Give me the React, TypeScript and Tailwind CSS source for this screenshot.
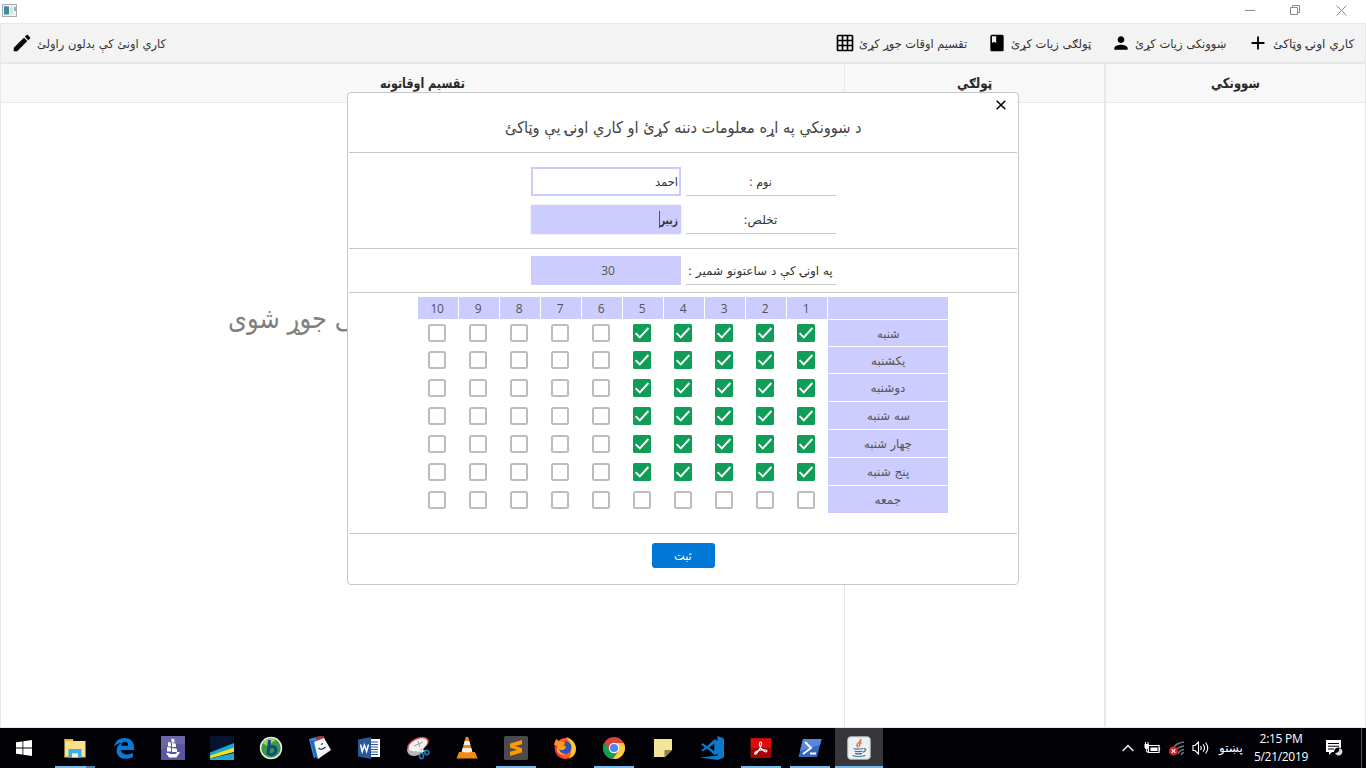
import { useLayoutEffect, useRef, useState, type ReactNode } from "react";
import { MdAdd, MdBook, MdEdit, MdGridOn, MdPerson } from "react-icons/md";

const DAYS = ["شنبه", "یکشنبه", "دوشنبه", "سه شنبه", "چهار شنبه", "پنج شنبه", "جمعه"];
const DAY_WIDTHS = [23, 34, 35, 43, 48, 42, 27];
const PERIODS = [1, 2, 3, 4, 5, 6, 7, 8, 9, 10];

/** Keeps a line of text at a fixed width whichever fallback font draws it. */
function Fit({ w, className = "", children }: { w: number; className?: string; children: ReactNode }) {
  const ref = useRef<HTMLSpanElement>(null);
  const [scale, setScale] = useState(1);
  useLayoutEffect(() => {
    if (ref.current && ref.current.offsetWidth) setScale(w / ref.current.offsetWidth);
  }, [w]);
  return (
    <span dir="ltr" className={`inline-flex shrink-0 justify-start font-['DejaVu_Sans',sans-serif] whitespace-nowrap ${className}`} style={{ width: w }}>
      <span ref={ref} dir="rtl" className="inline-block shrink-0 origin-left" style={{ transform: `scaleX(${scale})` }}>
        {children}
      </span>
    </span>
  );
}

function Check({ on }: { on: boolean }) {
  return on ? (
    <svg className="block size-[18px]" viewBox="0 0 18 18">
      <rect width="18" height="18" rx="1.5" fill="#0f9d58" />
      <path d="M2.6 9.2l4.2 4.2L15.4 4" fill="none" stroke="#fff" strokeWidth="1.9" />
    </svg>
  ) : (
    <span className="block size-[18px] rounded-[2.5px] border-2 border-[#bdbdbd] bg-white" />
  );
}

function TitleBar() {
  return (
    <div className="flex h-[23px] shrink-0 items-start justify-between bg-white">
      <svg className="mt-[4px] ml-[2px] h-[13px] w-[15px]" viewBox="0 0 15 13">
        <rect x=".5" y=".5" width="14" height="12" fill="#f2f2f4" stroke="#a7acb2" />
        <rect x="2" y="2.5" width="5" height="8" fill="#3c8f93" />
        <rect x="2" y="2.5" width="3" height="4" fill="#4a7fae" />
        <rect x="8" y="2.5" width="3" height="8" fill="#dedfe3" />
        <rect x="12" y="3" width="2" height="4" fill="#7dc0ae" />
      </svg>
      <div className="mt-[5px] mr-[19px] flex gap-[35px]">
        <svg className="-mr-px size-[11px]" viewBox="0 0 11 11"><path d="M0 5.5h10" stroke="#888" /></svg>
        <svg className="size-[11px]" viewBox="0 0 11 11" fill="none" stroke="#888">
          <path d="M.5 2.5h7v7h-7zM2.5 2.5v-2h7v7h-2" />
        </svg>
        <svg className="size-[11px]" viewBox="0 0 11 11"><path d="M.5.5l10 10M10.5.5l-10 10" stroke="#888" /></svg>
      </div>
    </div>
  );
}

function Toolbar() {
  return (
    <div className="flex h-[41px] shrink-0 items-center border border-b-2 border-[#e8e8e8] bg-[#f3f3f3] text-[12px] text-[#333]">
      <MdEdit className="ml-[10px] size-[22px] text-black" />
      <Fit w={129} className="ml-[4px] pt-px">كاري اونئ كې بدلون راولئ</Fit>
      <div className="ml-auto flex items-center">
        <MdGridOn className="size-[20px] text-black" />
        <Fit w={108} className="ml-[4px] pt-px">تقسیم اوقات جوړ کړئ</Fit>
        <MdBook className="ml-[20px] size-[20px] text-black" />
        <Fit w={80} className="ml-[4px] pt-px">ټولګی زیات کړئ</Fit>
        <MdPerson className="ml-[20px] size-[20px] text-black" />
        <Fit w={91} className="ml-[4px] pt-px">ښوونکی زیات کړئ</Fit>
        <MdAdd className="ml-[21px] size-[22px] text-black" />
        <Fit w={81} className="mr-[11px] ml-[4px] pt-px">كاري اونۍ وټاکئ</Fit>
      </div>
    </div>
  );
}

function Column({ title, w, className, children }: { title: string; w: number; className: string; children?: ReactNode }) {
  return (
    <section className={`flex shrink-0 flex-col border-[#e8e8e8] ${className}`}>
      <div className="flex h-[39px] items-center justify-center border-b border-[#e8e8e8] bg-[#f8f8f8] pt-px text-[14px] font-bold text-[#2a2a2a]">
        <Fit w={w}>{title}</Fit>
      </div>
      {children}
    </section>
  );
}

function LabelCell({ w, children }: { w: number; children: ReactNode }) {
  return (
    <div className="flex h-[29px] w-[150px] items-center justify-center border-b border-[#c8c8c8] pt-[2px]">
      <Fit w={w}>{children}</Fit>
    </div>
  );
}

function TeacherDialog() {
  return (
    <div className="absolute top-[92px] left-[347px] flex h-[493px] w-[672px] flex-col rounded-[4px] border border-[#c8c8c8] bg-white px-px text-[12px] text-[#333]">
      <div className="relative flex h-[60px] shrink-0 items-center justify-center border-b border-[#c8c8c8] pt-[11px] text-[16px] text-[#444]">
        <Fit w={357}>د ښوونکي په اړه معلومات دننه کړئ او کاري اونۍ یې وټاکئ</Fit>
        <svg className="absolute top-[7px] right-[11px] size-[10px]" viewBox="0 0 10 10">
          <path d="M.7.7l8.6 8.6M9.3.7L.7 9.3" stroke="#000" strokeWidth="1.5" />
        </svg>
      </div>

      <div className="flex h-[96px] shrink-0 flex-col items-center gap-[9px] border-b border-[#c8c8c8] pt-[14px]">
        <div className="flex gap-[5px]">
          <div className="flex h-[29px] w-[150px] items-center justify-end border-2 border-[#ccccff] pr-px">
            <Fit w={23}>احمد</Fit>
          </div>
          <LabelCell w={23}>نوم :</LabelCell>
        </div>
        <div className="flex gap-[5px]">
          <div className="flex h-[29px] w-[150px] items-center justify-end rounded-[1px] bg-[#ccccff] pr-[3px] font-bold shadow-[0_0_2px_#ccccff]">
            <span className="mb-px h-[17px] w-px bg-[#555]" />
            <Fit w={18}>زبیر</Fit>
          </div>
          <LabelCell w={34}>تخلص:</LabelCell>
        </div>
      </div>

      <div className="flex h-[44px] shrink-0 justify-center gap-[5px] border-b border-[#c8c8c8] pt-[7px]">
        <div className="flex h-[29px] w-[150px] items-center justify-center bg-[#ccccff] pt-px pl-[5px] tracking-[-0.2px] text-[#555]">30</div>
        <LabelCell w={145}>په اونۍ کې د ساعتونو شمیر :</LabelCell>
      </div>

      <div dir="rtl" className="flex h-[241px] shrink-0 flex-col gap-px border-b border-[#c8c8c8] pt-[4px] pr-[69px] text-[#555]">
        <div className="flex h-[22px] gap-px">
          <div className="w-[120px] bg-[#ccccff]" />
          {PERIODS.map((p) => (
            <div key={p} className="flex w-[40px] items-center justify-center bg-[#ccccff] pt-[2px] pr-[3px] pl-px tracking-[-0.3px]">
              {p}
            </div>
          ))}
        </div>
        {DAYS.map((day, r) => (
          <div key={day} className={`flex gap-px ${r < 2 ? "h-[26px]" : "h-[27px]"}`}>
            <div className="flex w-[120px] items-center justify-center bg-[#ccccff] pt-px">
              <Fit w={DAY_WIDTHS[r]}>{day}</Fit>
            </div>
            {PERIODS.map((p) => (
              <div key={p} className={`flex w-[40px] justify-end pl-[10px] ${r < 2 ? "pt-[4px]" : "pt-[5px]"}`}>
                <Check on={r < 6 && p <= 5} />
              </div>
            ))}
          </div>
        ))}
      </div>

      <div className="flex justify-center pt-[9px]">
        <button className="flex h-[25px] w-[63px] items-center justify-center rounded-[3px] bg-[#0078d7] text-white">
          <Fit w={18}>ثبت</Fit>
        </button>
      </div>
    </div>
  );
}

const APPS: { name: string; state?: "open" | "active"; art: ReactNode }[] = [
  {
    name: "explorer", state: "open",
    art: <>
      <path d="M1.500 3h8l1 2h12v16h-21z" fill="#ffe08a" />
      <path d="M1.500 3h8v2h-8z" fill="#eab038" />
      <path d="M1.500 20h21v1.500h-21z" fill="#f1c75a" />
      <path d="M5.500 21.500v-8.500h13v8.500h-3.500v-4H9v4z" fill="#38b0ea" />
      <path d="M9 17.500h6v4H9z" fill="#f7f0d8" />
    </>,
  },
  {
    name: "edge",
    art: <path d="M2 11C3 5 7.500 2 12.500 2 19 2 22.200 6.500 22.200 12v2.100H9c.2 3 2.600 4.400 5.700 4.400 2.400 0 4.400-.7 6.200-1.800V21c-2 1.200-4.400 1.800-7.100 1.800C7.900 22.800 4.600 19 4.600 14.400c0-3.300 1.800-6.100 4.800-7.500C6.300 7 3.500 8.800 2 11zm7.200-1.200h7c0-2.400-1.200-4-3.400-4s-3.400 1.800-3.600 4z" fill="#0a7ad8" />,
  },
  {
    name: "frigate",
    art: <>
      <rect width="24" height="24" fill="#5a559f" />
      <path d="M0 0h24v9L11 7 0 14z" fill="#746fae" opacity=".7" />
      <path d="M10.500 2.500q3 0 3 1.500v2.500h-3zM7 6q3 0 3 2v2.500H7zM11 7q4 0 4 1.500v2.500h-4zM6 11q4 0 4 1.500v3H6zM11 12q5 0 5 1.500v2.500h-5zM5 17h3l1 1h6l1-2h3l-3.500 5.500H8z" fill="#fff" />
    </>,
  },
  {
    name: "stripes",
    art: <>
      <path d="M0 0h24v24H0z" fill="#08132d" />
      <path d="M0 16.500L24 7v5L0 20z" fill="#19a3d9" />
      <path d="M0 19.500L24 11.500v4.500L0 22.500z" fill="#e8e11b" />
      <path d="M0 24v-1.500L24 17v7z" fill="#22a8d8" />
    </>,
  },
  {
    name: "b",
    art: <>
      <circle cx="12" cy="12" r="11.200" fill="#e7f0e4" />
      <circle cx="12" cy="12" r="9.700" fill="#3a9b3e" />
      <path d="M4 7a9 9 0 0 1 13-3L8 10z" fill="#a0d468" />
      <path d="M10.500 4L9 17.500q4 2.500 7-.5 2-3 0-5.500-2.500-2-5 0" fill="none" stroke="#15468f" strokeWidth="3" />
    </>,
  },
  {
    name: "notebook",
    art: <>
      <path d="M1 3l12-3 2 3-9 20z" fill="#3b8ee8" />
      <path d="M7 1l9-1 1 4-8 2z" fill="#9b4033" />
      <path d="M2 4l5 17 3 2L7 5z" fill="#1d66c4" />
      <path d="M6 6l10-4 7 12-13 9z" fill="#f4f5fb" />
      <path d="M10.500 12q3 3 7-1M13 8.500l2-1" fill="none" stroke="#26365c" strokeWidth="1.200" />
    </>,
  },
  {
    name: "word",
    art: <>
      <path d="M12 3h11v18H12z" fill="#fff" />
      <path d="M14 6h7M14 8.500h7M14 11h7M14 13.500h7M14 16h7M14 18.500h7" stroke="#2b579a" />
      <path d="M1 3.500L14 1v22L1 20.500z" fill="#2b579a" />
      <path d="M3.500 8.500l1.700 7 2.200-6.500 2.200 6.500 1.900-7" fill="none" stroke="#fff" strokeWidth="1.500" />
    </>,
  },
  {
    name: "snip",
    art: <>
      <ellipse cx="12" cy="8.500" rx="11.500" ry="6.500" transform="rotate(-25 12 8.500)" fill="#d94b52" />
      <path d="M1 13q0 6 6 7 6 0 10-4l-3-4z" fill="#b9b9b9" />
      <ellipse cx="12" cy="8.800" rx="10" ry="5.400" transform="rotate(-25 12 8.800)" fill="#f3f3f3" />
      <path d="M8 10l9-4M12 5l2 6" stroke="#999" />
      <path d="M11 15l9 0M17 11l-1 6" stroke="#eee" strokeWidth="1.500" />
      <circle cx="20.800" cy="16.500" r="2.100" fill="none" stroke="#1c7bb8" strokeWidth="1.600" />
      <ellipse cx="15.500" cy="20" rx="1.900" ry="2.800" fill="none" stroke="#1c7bb8" strokeWidth="1.600" />
    </>,
  },
  {
    name: "vlc",
    art: <>
      <path d="M4 16h16l2.500 6.500h-21z" fill="#f08a12" />
      <path d="M10.800 1h2.400L18 18q-6 3-12 0z" fill="#f58a14" />
      <path d="M9.700 5h4.600l1.100 4H8.600zM7.700 12h8.600l1 3.500q-5.300 2-10.600 0z" fill="#f2f2f2" />
    </>,
  },
  {
    name: "sublime", state: "open",
    art: <>
      <rect width="24" height="24" rx="1.500" fill="#4b4b4b" />
      <path d="M6 7.500L18 4v4.200L11 10l7 2.200v4.300L6 20v-4.200l7-2L6 11.700z" fill="#ff9800" />
    </>,
  },
  {
    name: "firefox",
    art: <>
      <circle cx="12.500" cy="12.500" r="10.500" fill="#ff5a26" />
      <path d="M13 1q9 3 10 11 0 8-7 10.500Q22 12 13 1z" fill="#ffc928" />
      <path d="M1 9Q2 4 4 3l2 3q4-2 6 1l-4 4z" fill="#ff9526" />
      <path d="M1.500 10q0 12 11 13-8-4-6-12z" fill="#f0265c" />
      <path d="M12 5q7 1 6.500 7-1 5.500-6.500 6-5-.5-6-5 4 2 6-1l-3-2q1-1 3-1z" fill="#2a52b8" />
      <path d="M6 9l5 .5q3 1 1 3-3 3-6 0 1 6 7 5-6 3-9-2-1-4 2-6.500z" fill="#ffad1f" />
    </>,
  },
  {
    name: "chrome", state: "open",
    art: <>
      <circle cx="12" cy="12" r="11" fill="#da4437" />
      <path d="M2.500 6.500A11 11 0 0 0 11 23l5-8.500-8.800 0z" fill="#109d58" />
      <path d="M11 23A11 11 0 0 0 21.700 7H12l4.500 8z" fill="#ffcd42" />
      <circle cx="12" cy="12" r="5.200" fill="#fff" />
      <circle cx="12" cy="12" r="4.100" fill="#4a8af4" />
    </>,
  },
  {
    name: "note",
    art: <>
      <path d="M3 3h18v11l-7 7H3z" fill="#f1e597" />
      <path d="M13.500 21v-7H21z" fill="#8a8150" />
    </>,
  },
  {
    name: "vscode",
    art: <path d="M17.500 0L24 2.500v19L17.500 24 0 21.500l17.500-2V4.300zM3 7.300l4 3 7.500-7 3 1.400v13l-3 1.300L7 12.500l-4 3-2-1 3.800-3.100L1 8.300zM9.300 11.500l5 3.800V7.500z" fill="#0a7bcc" fillRule="evenodd" />,
  },
  {
    name: "pdf", state: "open",
    art: <>
      <path d="M1.500 2h21v20h-21z" fill="#a50505" />
      <path d="M2 2.500h20V12H2z" fill="#dd0d0d" />
      <path d="M11.500 6q2 0 .5 4-2 5-5 8-2 .5-1-1.500 4-3.500 11-2.500 2 1 0 2-4-1-6.500-6.500-.5-3 1-3.500z" fill="none" stroke="#fff" strokeWidth="1.100" />
    </>,
  },
  {
    name: "powershell", state: "open",
    art: <>
      <path d="M5 3h18.500L19 21H.500z" fill="#3567bd" />
      <path d="M5 3h18.500L22 9 2 15z" fill="#5688dd" />
      <path d="M7 6l6 6-8 6M12 17.500h6" fill="none" stroke="#fff" strokeWidth="2" />
    </>,
  },
  {
    name: "java", state: "active",
    art: <>
      <rect x=".7" y=".7" width="22.600" height="22.600" rx="3" fill="#eef1f3" stroke="#a9b0b5" />
      <path d="M13.500 3q1 2-2 4t0 4.500M14.500 6.500q-3 2-1.500 4" fill="none" stroke="#e0702a" strokeWidth="1.500" />
      <path d="M6.500 12.500q4 1.200 9.500 0M7.500 15q4 1.200 8 0M8 17.300q3.500 1 7 0M5.500 19.500q6 2 13 0M16.500 12.500q3.500 0 1.500 2.500l-2 1.300" fill="none" stroke="#40718f" strokeWidth="1.200" />
    </>,
  },
];

function Taskbar() {
  return (
    <div className="flex h-[40px] shrink-0 items-center bg-[#020106] text-white">
      <div className="flex w-[50px] shrink-0 pl-[16px]">
        <svg className="size-[16px]" viewBox="0 0 16 16" fill="#fff">
          <path d="M0 2.300L6.500 1.400v6.200H0zM7.300 1.300L16 0v7.600H7.300zM0 8.400h6.500v6.200L0 13.700zM7.300 8.400H16V16l-8.700-1.300z" />
        </svg>
      </div>
      {APPS.map((a) => (
        <div key={a.name} className="flex h-[40px] w-[49px] shrink-0 justify-center">
          <div className={`flex h-full flex-col items-center justify-between pt-[8px] ${a.state === "active" ? "w-[48px] shrink-0 bg-[#37363b]" : "w-[40px]"}`}>
            <svg className="size-[24px]" viewBox="0 0 24 24">{a.art}</svg>
            {a.state && (
              <div className="flex h-[2px] w-full bg-[#76b9ed]">
                {a.name === "explorer" && <span className="ml-auto w-[9px] bg-[#4d80a8]" />}
              </div>
            )}
          </div>
        </div>
      ))}
      <div className="ml-auto flex items-center">
        <svg className="h-[8px] w-[12px]" viewBox="0 0 12 8"><path d="M.7 7L6 1.500 11.300 7" fill="none" stroke="#fff" strokeWidth="1.300" /></svg>
        <svg className="ml-[10px] h-[13px] w-[17px]" viewBox="0 0 17 13">
          <path d="M4.500 3.500h10.500v7H4.500zM15.500 5.500v3" fill="none" stroke="#fff" strokeWidth="1.200" />
          <path d="M6.500 5.500h7v3.500h-7zM.5 2h4.500v3.500L3.500 7h-2L.5 5.500z" fill="#fff" />
          <path d="M1.500 0v2M4 0v2M2.700 7v3h2" fill="none" stroke="#fff" />
        </svg>
        <svg className="ml-[8px] h-[15px] w-[16px]" viewBox="0 0 16 15">
          <path d="M3 9Q6 2 15 1M6 11q2-5 9-6M9 13q1-3.500 6-4.500M12 14q.5-2 3-2.500" fill="none" stroke="#77777b" strokeWidth="1.300" />
          <circle cx="4.500" cy="10" r="4.500" fill="#dc2027" />
          <path d="M2.700 8.200l3.600 3.600M6.300 8.200l-3.600 3.600" stroke="#fff" strokeWidth="1.200" />
        </svg>
        <svg className="ml-[7px] h-[14px] w-[17px]" viewBox="0 0 17 14" fill="none" stroke="#fff" strokeWidth="1.100">
          <path d="M1 4.500h2L6.500 1v12L3 9.500H1zM8.500 5q1.500 2 0 4M11 3.300q3 3.700 0 7.400M13.500 1.500q4.500 5.500 0 11" />
        </svg>
        <Fit w={24} className="ml-[10px] text-[12px]">پښتو</Fit>
        <div className="ml-[9px] flex w-[58px] flex-col items-center text-[12px] leading-[18px] tracking-[-0.3px] whitespace-nowrap">
          <span>2:15 PM</span>
          <span>5/21/2019</span>
        </div>
        <svg className="ml-[15px] h-[17px] w-[18px]" viewBox="0 0 18 17">
          <path d="M1 0h15v12H7l-3 3v-3H1z" fill="#fff" />
          <path d="M3 3.500h11M3 6.200h11M3 9h6" stroke="#020106" />
          <circle cx="13.500" cy="12" r="4.500" fill="#020106" />
          <path d="M14.500 8a3.800 3.800 0 1 1-4.500 5q4.500 0 4.500-5z" fill="#ddd" />
        </svg>
        <span className="ml-[18px] h-[40px] w-px bg-[#55545a]" />
        <span className="w-[4px]" />
      </div>
    </div>
  );
}

export default function App() {
  return (
    <div className="relative flex h-[768px] w-[1366px] flex-col overflow-hidden bg-white font-['Open_Sans','DejaVu_Sans',sans-serif]">
      <TitleBar />
      <Toolbar />
      <main className="flex h-[664px] shrink-0 border-b border-[#e8e8e8]">
        <Column title="تقسیم اوقاتونه" w={85} className="w-[844px] border-l">
          <div className="mt-[191px] ml-[227px] text-[28px] leading-[46px] text-[#808080]">
            <Fit w={134}>لی جوړ شوی</Fit>
          </div>
        </Column>
        <Column title="ټولګي" w={35} className="w-[261px] border-r border-l" />
        <Column title="ښوونکي" w={49} className="w-[261px] border-r border-l" />
      </main>
      <Taskbar />
      <TeacherDialog />
    </div>
  );
}
